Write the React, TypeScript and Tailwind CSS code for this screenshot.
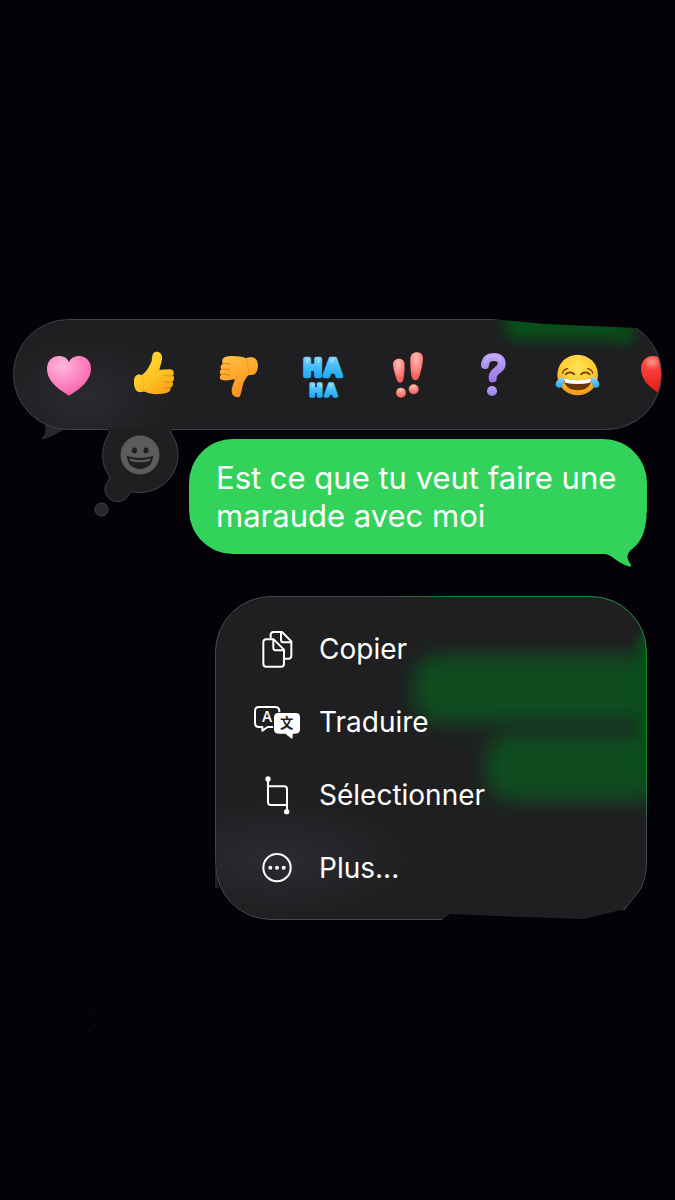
import type { ReactNode } from "react";

const HEART =
  "M72 134C30 110 5 84 6 52C7 29 22 15 42 15C57 15 67 22 72 33C77 22 88 15 102 15C122 15 138 30 138 52C138 84 114 110 72 134Z";

type IconProps = { children: ReactNode };

function Icon({ children }: IconProps) {
  return (
    <svg viewBox="0 0 144 144" className="size-12 shrink-0" aria-hidden="true">
      {children}
    </svg>
  );
}

function Gradients() {
  return (
    <svg className="absolute size-0" aria-hidden="true">
      <defs>
        <radialGradient id="pink" cx="0.35" cy="0.25" r="0.85">
          <stop offset="0" stopColor="#ffb9dc" />
          <stop offset="0.55" stopColor="#fd83c0" />
          <stop offset="1" stopColor="#f556a8" />
        </radialGradient>
        <radialGradient id="red" cx="0.25" cy="0.15" r="0.8">
          <stop offset="0" stopColor="#ff9a8c" />
          <stop offset="0.25" stopColor="#f8423c" />
          <stop offset="1" stopColor="#e0180f" />
        </radialGradient>
        <linearGradient id="thumb" x1="0" y1="0" x2="0.6" y2="1">
          <stop offset="0" stopColor="#ffdc35" />
          <stop offset="0.6" stopColor="#ffc826" />
          <stop offset="1" stopColor="#f9a81a" />
        </linearGradient>
        <linearGradient id="thumbDown" x1="0" y1="0" x2="0.4" y2="1">
          <stop offset="0" stopColor="#ffc445" />
          <stop offset="0.5" stopColor="#ffaa2e" />
          <stop offset="1" stopColor="#f79220" />
        </linearGradient>
        <linearGradient id="blue" x1="0" y1="0" x2="0" y2="1">
          <stop offset="0" stopColor="#8fdcff" />
          <stop offset="0.5" stopColor="#41bdfb" />
          <stop offset="1" stopColor="#12a5f5" />
        </linearGradient>
        <radialGradient id="coral" cx="0.45" cy="0.2" r="0.8">
          <stop offset="0" stopColor="#ffc0b8" />
          <stop offset="0.6" stopColor="#fb8078" />
          <stop offset="1" stopColor="#f0574f" />
        </radialGradient>
        <linearGradient id="violet" x1="0" y1="0" x2="0" y2="1">
          <stop offset="0" stopColor="#b9a0f6" />
          <stop offset="1" stopColor="#9a7fe8" />
        </linearGradient>
        <radialGradient id="face" cx="0.5" cy="0.3" r="0.7">
          <stop offset="0" stopColor="#ffe455" />
          <stop offset="0.6" stopColor="#fecb2e" />
          <stop offset="1" stopColor="#ee9412" />
        </radialGradient>
        <linearGradient id="tear" x1="0" y1="0" x2="0" y2="1">
          <stop offset="0" stopColor="#8fdcfa" />
          <stop offset="1" stopColor="#2ba5e6" />
        </linearGradient>
      </defs>
    </svg>
  );
}

function ThumbsUp() {
  return (
    <Icon>
      <path
        fill="url(#thumb)"
        d="M76 3C86 0 98 8 96 24C95 36 90 46 88 56C100 57 112 55 120 55C131 55 134 66 129 73C134 79 133 88 127 92C131 99 128 108 121 110C123 118 117 124 108 126C92 130 70 131 54 126C46 121 40 122 34 123C20 126 11 112 12 92C12 74 22 68 34 72C44 70 58 48 65 30C67 18 66 5 76 3Z"
      />
      <g fill="none" stroke="#e08a10" strokeWidth="3" strokeLinecap="round">
        <path d="M129 73C120 76 112 76 103 73M127 92C118 95 110 95 103 92M121 110C114 112 107 112 101 109" />
        <path d="M34 73C42 84 44 104 38 121" opacity="0.3" />
        <path d="M88 56C84 62 80 66 76 68" opacity="0.4" />
      </g>
    </Icon>
  );
}

function ThumbsDown() {
  return (
    <Icon>
      <path
        fill="url(#thumbDown)"
        d="M30 18C44 13 76 14 94 22C102 18 118 17 124 26C132 38 130 60 120 69C110 74 104 70 100 73C92 82 86 92 83 104C79 120 78 134 72 138C62 141 50 134 50 120C50 108 56 98 60 85C46 87 32 90 22 87C14 86 12 76 18 71C13 67 14 58 19 55C15 50 17 42 23 39C20 30 22 21 30 18Z"
      />
      <g fill="none" stroke="#dd7d14" strokeWidth="3" strokeLinecap="round">
        <path d="M23 39C31 36 38 37 46 40M19 55C28 52 37 54 44 57M18 71C27 68 36 70 44 73" />
        <path d="M94 23C99 36 102 56 100 72" opacity="0.45" />
        <path d="M60 85C64 80 66 76 71 73" opacity="0.6" />
      </g>
    </Icon>
  );
}

function HaHa() {
  return (
    <Icon>
      <g
        fill="url(#blue)"
        stroke="url(#blue)"
        strokeLinejoin="round"
        fontFamily="'Liberation Sans', sans-serif"
        fontWeight="700"
      >
        <text x="11 72" y="74" fontSize="74" strokeWidth="13">
          HA
        </text>
        <text x="30 75" y="134" fontSize="50" strokeWidth="10">
          HA
        </text>
      </g>
      <g stroke="#d3f1ff" strokeWidth="6" strokeLinecap="round" opacity="0.5">
        <path d="M22 24v10M56 24v10M99 24l-4 8M38 102v4M62 102v4M93 102l-2 4" />
      </g>
    </Icon>
  );
}

function Emphasis() {
  return (
    <Icon>
      <g fill="url(#coral)">
        <path d="M27 42C26 29 36 23 45 23C56 23 62 30 62 42C62 58 61 72 58 86C56 98 42 98 39 87C34 72 28 56 27 42Z" />
        <circle cx="51" cy="125" r="15" />
        <path d="M98 4C110 3 118 12 117 24C116 42 110 64 105 79C101 91 87 91 83 79C80 62 78 40 79 22C79 11 88 4 98 4Z" />
        <circle cx="89" cy="115" r="15" />
      </g>
    </Icon>
  );
}

function Question() {
  return (
    <Icon>
      <path
        d="M48 42C50 23 61 18 75 18C91 18 99 27 98 40C97 58 69 58 71 82"
        fill="none"
        stroke="url(#violet)"
        strokeWidth="24"
        strokeLinecap="round"
      />
      <path
        d="M48 36C52 20 63 14 75 14C87 14 95 21 96 32"
        fill="none"
        stroke="#cfbdff"
        strokeWidth="6"
        strokeLinecap="round"
        opacity="0.5"
      />
      <circle cx="69" cy="120" r="15" fill="url(#violet)" />
    </Icon>
  );
}

function Joy() {
  return (
    <Icon>
      <circle cx="71" cy="72" r="61" fill="url(#face)" />
      <path d="M29 81C56 90 87 90 113 81C113 104 96 118 71 118C46 118 29 104 29 81Z" fill="#6b3508" />
      <path d="M30 82C56 90 87 90 112 82C112 88 110 92 108 95C84 100 58 100 34 95C32 92 30 88 30 82Z" fill="#fff" />
      <g fill="none" stroke="#6b3c08" strokeLinecap="round">
        <path d="M35 70C42 62 54 62 61 70M81 70C88 62 100 62 107 70" strokeWidth="5" />
        <path d="M26 66C28 58 33 54 41 53M116 66C114 58 109 54 101 53" strokeWidth="4" />
      </g>
      <g fill="url(#tear)">
        <path d="M30 77C18 80 6 88 5 99C5 107 11 112 18 110C28 107 30 92 30 77Z" />
        <path d="M112 77C124 80 135 88 136 99C136 107 130 112 123 110C114 107 112 92 112 77Z" />
      </g>
    </Icon>
  );
}

const reactions = [
  { label: "Cœur rose", icon: <Icon><path d={HEART} fill="url(#pink)" /></Icon> },
  { label: "J’aime", icon: <ThumbsUp /> },
  { label: "Je n’aime pas", icon: <ThumbsDown /> },
  { label: "Haha", icon: <HaHa /> },
  { label: "Exclamation", icon: <Emphasis /> },
  { label: "Question", icon: <Question /> },
  { label: "Rire aux larmes", icon: <Joy /> },
  { label: "Cœur rouge", icon: <Icon><path d={HEART} fill="url(#red)" /></Icon> },
];

const actions = [
  {
    label: "Copier",
    icon: (
      <Icon>
        <g fill="none" stroke="#fff" strokeWidth="6" strokeLinejoin="round">
          <path d="M53 40V30Q53 21 62 21H87L115 49V92Q115 101 106 101H95M84 22V44Q84 52 92 52H114" />
          <path d="M40 43H62L93 74V116Q93 125 84 125H40Q31 125 31 116V52Q31 43 40 43ZM61 44V68Q61 76 69 76H92" />
        </g>
      </Icon>
    ),
  },
  {
    label: "Traduire",
    icon: (
      <Icon>
        <path
          d="M18 27H66Q79 27 79 40V75Q79 87 66 87H44L28 98V87H18Q6 87 6 75V40Q6 27 18 27Z"
          fill="none"
          stroke="#fff"
          strokeWidth="6"
          strokeLinejoin="round"
        />
        <path
          d="M76 45H128Q141 45 141 58V94Q141 107 128 107H119V119Q118 124 113 120L97 107H76Q63 107 63 94V58Q63 45 76 45Z"
          fill="#fff"
          stroke="#1f1f22"
          strokeWidth="5"
          paintOrder="stroke"
        />
        <text x="42" y="72" fill="#fff" fontSize="45" fontWeight="500" textAnchor="middle" fontFamily="Inter, sans-serif">
          A
        </text>
        <text
          x="101"
          y="91"
          fill="#1f1f22"
          fontSize="40"
          fontWeight="700"
          textAnchor="middle"
          fontFamily="'Noto Sans CJK SC', sans-serif"
        >
          文
        </text>
      </Icon>
    ),
  },
  {
    label: "Sélectionner",
    icon: (
      <Icon>
        <g fill="none" stroke="#fff" strokeWidth="6" strokeLinejoin="round">
          <path d="M45 24V94Q45 102 53 102H101M45 46H94Q102 46 102 54V122" />
        </g>
        <circle cx="45" cy="24" r="8" fill="#fff" />
        <circle cx="101" cy="122" r="8" fill="#fff" />
      </Icon>
    ),
  },
  {
    label: "Plus...",
    icon: (
      <Icon>
        <circle cx="72" cy="71" r="41" fill="none" stroke="#fff" strokeWidth="6" />
        <g fill="#fff">
          <circle cx="52" cy="71" r="6" />
          <circle cx="72" cy="71" r="6" />
          <circle cx="92" cy="71" r="6" />
        </g>
      </Icon>
    ),
  },
];

function ReactionBar() {
  return (
    <section className="relative mx-[13px]" aria-label="Réactions">
      <svg
        viewBox="0 0 60 16"
        className="absolute top-[106px] left-6 h-4 w-[60px]"
        aria-hidden="true"
      >
        <path d="M8 0C9 6 8 10 5 13C4 14 5 15 7 14C16 12 21 7 28 4L30 0Z" fill="#28282c" />
      </svg>

      <div className="relative h-[111px] overflow-hidden rounded-[56px] border border-[#424246] bg-[#1f1f22] bg-[radial-gradient(ellipse_90px_60px_at_70px_76px,#2b2b2f,transparent)]">
        <div className="absolute -top-4 right-8 h-9 w-[124px] rounded-xl bg-[#085018] blur-[7px]" />
        <div className="absolute top-2 right-7 size-4 rounded-full bg-[#085018] blur-[6px]" />
        <div className="relative -mr-11 ml-[13px] grid h-full grid-cols-8">
          {reactions.map(({ label, icon }) => (
            <button key={label} type="button" aria-label={label} className="flex items-center justify-center">
              {icon}
            </button>
          ))}
        </div>
      </div>

      {/* chipped top edge */}
      <svg viewBox="0 0 180 12" className="absolute -top-px right-0 h-3 w-[180px]" aria-hidden="true">
        <path d="M0 0H180V10H156L63 6L10 1Z" fill="#030208" />
      </svg>

      {/* emoji picker thought bubble */}
      <button type="button" aria-label="Autres emojis" className="absolute top-[109px] left-20 h-[92px] w-[92px]">
        <svg viewBox="0 0 92 92" className="size-full" aria-hidden="true">
          <path
            d="M14 1.500Q18 2 15.500 7C7.500 18 8 38 16 47Q18 50 15 53A12.500 12.500 0 1 0 36 66Q37 63 40 64C64 68 85 50 85 27C85 18 82 11 78.500 6Q76 2 80 1.500"
            fill="#1f1f22"
            stroke="#424246"
          />
          <path d="M15 0H79V3H15Z" fill="#1f1f22" />
          <circle cx="8.500" cy="81.500" r="6.500" fill="#28282b" stroke="#424246" />
          <circle cx="47" cy="27" r="19.500" fill="#5c5c5f" />
          <ellipse cx="41.500" cy="22.500" rx="2.500" ry="3" fill="#1f1f22" />
          <ellipse cx="53" cy="22.500" rx="2.500" ry="3" fill="#1f1f22" />
          <path d="M34 28Q47 32 60 28C60 36 54 41 47 41C40 41 34 36 34 28Z" fill="#1f1f22" />
          <path d="M36.500 30.500Q47 33.500 57.500 30.500L57 33Q47 35.500 37 33Z" fill="#5c5c5f" />
        </svg>
      </button>
    </section>
  );
}

function Message() {
  return (
    <div className="relative mt-[9px] mr-7 ml-[189px] rounded-[44px] bg-[#33d35b] px-[27px] pt-5 pb-[19px]">
      <p className="text-[31px] leading-[38px] text-white">Est ce que tu veut faire une maraude avec moi</p>
      <svg viewBox="0 0 60 50" className="absolute right-0 -bottom-[13px] h-[50px] w-[60px]" aria-hidden="true">
        <path
          d="M0 37H18C24 37 30 46 42 49.500C44 50 44.500 49 43.500 47C40 42 39 38 44 33C53 26 58 18 59.500 0H0Z"
          fill="#33d35b"
        />
      </svg>
    </div>
  );
}

function ActionMenu() {
  return (
    <section className="relative mt-[42px] mr-7 ml-[215px]">
      <div className="relative overflow-hidden rounded-[56px] border border-[#48484c] bg-[#1f1f22] bg-[radial-gradient(ellipse_140px_60px_at_60px_262px,#2c2c30,transparent)] pt-[15px] pb-[15px]">
        <div className="absolute top-[58px] -right-6 left-[198px] h-[68px] rounded-3xl bg-[#0f4d20] blur-[10px]" />
        <div className="absolute top-[136px] -right-6 left-[270px] h-[68px] rounded-3xl bg-[#0f4d20] blur-[10px]" />
        <div className="absolute top-9 -right-3 h-[150px] w-5 rounded-full bg-[#085018] blur-[6px]" />
        <ul className="relative">
          {actions.map(({ label, icon }) => (
            <li key={label}>
              <button
                type="button"
                className="flex h-[73px] w-full items-center gap-[18px] pl-[37px] text-left text-[28px] leading-9 text-white"
              >
                {icon}
                {label}
              </button>
            </li>
          ))}
        </ul>
      </div>

      {/* green rim picked up from the message behind */}
      <div className="pointer-events-none absolute inset-0 rounded-[56px] border border-[#0d8a30] [mask-image:linear-gradient(90deg,transparent_40%,black_55%),linear-gradient(180deg,black_55%,transparent_72%)] [mask-composite:intersect]" />

      {/* chipped bottom edge */}
      <svg
        viewBox="0 0 210 50"
        className="pointer-events-none absolute right-0 -bottom-0.5 h-[50px] w-[210px]"
        aria-hidden="true"
      >
        <path d="M2 50L13 42L60 44L146 47L184 38L187 38L206 14L210 10V50Z" fill="#030208" />
        <path d="M187 38L205 15" stroke="#48484c" />
      </svg>
      <svg viewBox="0 0 8 40" className="absolute bottom-8 left-0 h-10 w-2" aria-hidden="true">
        <path d="M0 0C0 16 1 28 4 40H0Z" fill="#222225" />
      </svg>
    </section>
  );
}

export default function App() {
  return (
    <main className="relative min-h-screen bg-[#030208] pt-[319px] font-[Inter,'Liberation_Sans',sans-serif] antialiased">
      <Gradients />
      <ReactionBar />
      <Message />
      <ActionMenu />
      <div className="mt-[93px] ml-[94px] flex w-px flex-col gap-[10px]" aria-hidden="true">
        <span className="h-px bg-[#2a2a2d]" />
        <span className="h-px bg-[#2a2a2d]" />
      </div>
    </main>
  );
}
